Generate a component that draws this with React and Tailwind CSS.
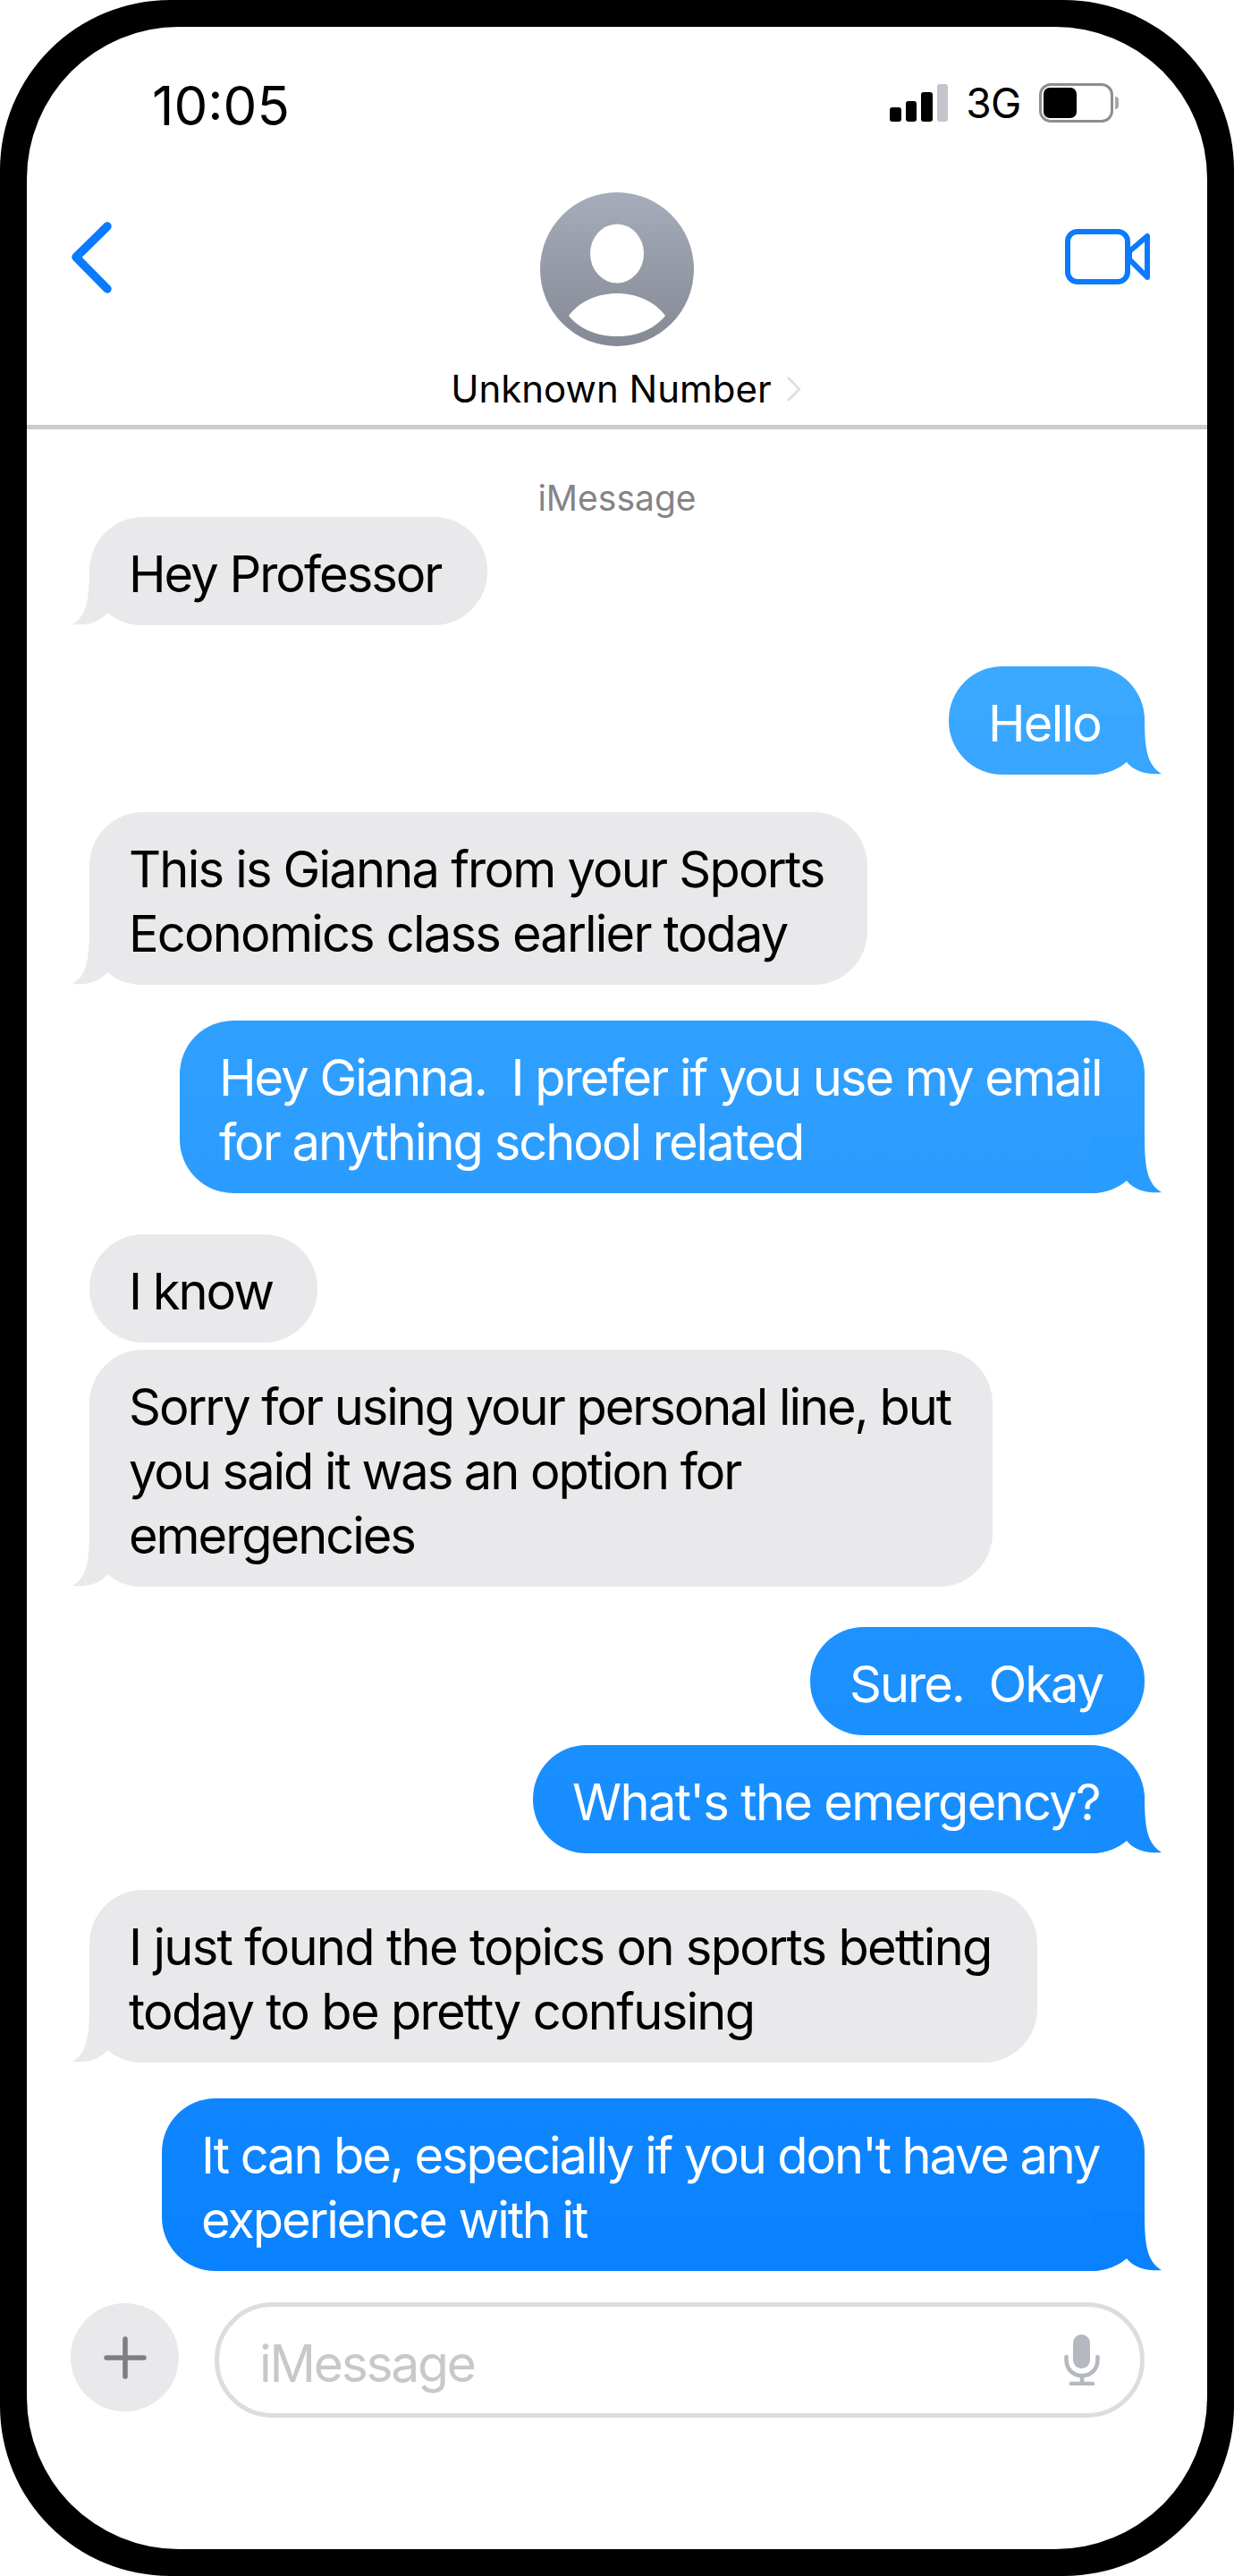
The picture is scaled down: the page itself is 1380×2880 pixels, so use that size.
const MESSAGES = [
  { me: false, w: "w-[445px]", mt: "mt-0", track: "tracking-[-2px]", lines: ["Hey Professor"], bg: "bg-[#e9e9eb]", tail: "text-[#e9e9eb]" },
  { me: true, w: "w-[219px]", mt: "mt-[46px]", track: "tracking-[-1.8px]", lines: ["Hello"], bg: "bg-linear-to-b from-[#3ba9ff] to-[#38a6ff]", tail: "text-[#38a6ff]" },
  { me: false, w: "w-[870px]", mt: "mt-[42px]", track: "tracking-[-1.8px]", lines: ["This is Gianna from your Sports", "Economics class earlier today"], bg: "bg-[#e9e9eb]", tail: "text-[#e9e9eb]" },
  { me: true, w: "w-[1079px]", mt: "mt-[40px]", track: "tracking-[-2px]", lines: ["Hey Gianna.  I prefer if you use my email", "for anything school related"], bg: "bg-linear-to-b from-[#30a0ff] to-[#2b9cff]", tail: "text-[#2b9cff]" },
  { me: false, w: "w-[255px]", mt: "mt-[46px]", track: "tracking-[-2px]", lines: ["I know"], bg: "bg-[#e9e9eb]" },
  { me: false, w: "w-[1010px]", mt: "mt-[8px]", track: "tracking-[-2.05px]", lines: ["Sorry for using your personal line, but", "you said it was an option for", "emergencies"], bg: "bg-[#e9e9eb]", tail: "text-[#e9e9eb]" },
  { me: true, w: "w-[374px]", mt: "mt-[45px]", track: "tracking-[-2px]", lines: ["Sure.  Okay"], bg: "bg-linear-to-b from-[#1e92ff] to-[#1a8fff]" },
  { me: true, w: "w-[684px]", mt: "mt-[11px]", track: "tracking-[-1.7px]", lines: ["What's the emergency?"], bg: "bg-linear-to-b from-[#1a8fff] to-[#178cff]", tail: "text-[#178cff]" },
  { me: false, w: "w-[1060px]", mt: "mt-[41px]", track: "tracking-[-1.7px]", lines: ["I just found the topics on sports betting", "today to be pretty confusing"], bg: "bg-[#e9e9eb]", tail: "text-[#e9e9eb]" },
  { me: true, w: "w-[1099px]", mt: "mt-[40px]", track: "tracking-[-2.1px]", lines: ["It can be, especially if you don't have any", "experience with it"], bg: "bg-linear-to-b from-[#0f86ff] to-[#0a82ff]", tail: "text-[#0a82ff]" },
];

function Tail({ me, color }) {
  return (
    <svg
      viewBox="0 0 80 66"
      className={`absolute bottom-0 w-[80px] h-[66px] ${color} ${me ? "right-[-20px]" : "left-[-20px] -scale-x-100"}`}
    >
      <path
        fill="currentColor"
        d="M0 0H60C60 35 62 55 79 65C68 66 50 65 40 52C32 59 18 66 0 66Z"
      />
    </svg>
  );
}

function Bubble({ msg }) {
  return (
    <div
      className={`relative ${msg.w} ${msg.mt} ${msg.bg} ${msg.track} ${msg.me ? "self-end text-white" : "self-start text-black"} rounded-[60px] pl-[44px] pr-[20px] pt-[28px] pb-[21px] text-[56px] leading-[72px] whitespace-pre`}
    >
      {msg.tail && <Tail me={msg.me} color={msg.tail} />}
      {msg.lines.map((line) => (
        <div key={line} className="relative">{line}</div>
      ))}
    </div>
  );
}

function StatusIcons() {
  return (
    <div className="flex items-center">
      <div className="flex items-end gap-[5px]">
        <div className="w-[13px] h-[16px] rounded-[3px] bg-black" />
        <div className="w-[12px] h-[23px] rounded-[3px] bg-black" />
        <div className="w-[13px] h-[33px] rounded-[3px] bg-black" />
        <div className="w-[12px] h-[42px] rounded-[3px] bg-[#c4c4cc]" />
      </div>
      <span className="ml-[20px] text-[46px] leading-none tracking-[-0.01em]">3G</span>
      <div className="ml-[20px] flex items-center">
        <div className="w-[83px] h-[44px] rounded-[13px] border-[3px] border-[#8e8e8e] p-[2px]">
          <div className="w-[37px] h-full rounded-[7px] bg-black" />
        </div>
        <div className="ml-[2px] w-[4px] h-[14px] rounded-r-full bg-[#a8a8a8]" />
      </div>
    </div>
  );
}

function Avatar() {
  return (
    <svg viewBox="0 0 172 172" className="w-[172px] h-[172px]">
      <defs>
        <linearGradient id="avatarGrad" x1="0" y1="0" x2="0" y2="1">
          <stop offset="0" stopColor="#a6acb9" />
          <stop offset="1" stopColor="#858995" />
        </linearGradient>
      </defs>
      <circle cx="86" cy="86" r="86" fill="url(#avatarGrad)" />
      <ellipse cx="86" cy="68.500" rx="30" ry="33" fill="#fff" />
      <path fill="#fff" d="M32 138C44 122 64 113 86 113C108 113 128 122 140 138C127 154 107 161 86 161C65 161 45 154 32 138Z" />
    </svg>
  );
}

export default function App() {
  return (
    <div className="w-[1380px] h-[2880px] bg-white [font-family:Inter,sans-serif]">
      <div className="w-full h-full p-[30px] bg-black rounded-[190px]">
        <div className="w-full h-full flex flex-col bg-white rounded-[170px] overflow-hidden text-black">
          {/* Status bar */}
          <div className="h-[170px] shrink-0 flex items-center justify-between pl-[140px] pr-[99px]">
            <span className="pt-[5px] text-[60px] leading-none">10:05</span>
            <StatusIcons />
          </div>

          {/* Contact header */}
          <div className="relative h-[280px] shrink-0 flex flex-col items-center border-b-[5px] border-[#cccccc] pt-[15px]">
            <svg viewBox="0 0 45 80" className="absolute left-[50px] top-[48px] w-[45px] h-[80px]" fill="none" stroke="#0a7aff" strokeWidth="9.5" strokeLinecap="round" strokeLinejoin="round">
              <path d="M40 5L5 39.500L40 75" />
            </svg>
            <svg viewBox="0 0 95 62" className="absolute right-[64px] top-[56px] w-[95px] h-[62px]" fill="none" stroke="#0a7aff" strokeWidth="6" strokeLinejoin="round">
              <rect x="3" y="3" width="67" height="56" rx="11" />
              <path d="M72 25L92 8V54L72 34Z" />
            </svg>
            <Avatar />
            <div className="ml-[20px] mt-[20px] flex items-center">
              <span className="text-[42px] leading-[56px]">Unknown Number</span>
              <svg viewBox="0 0 16 28" className="ml-[17px] w-[16px] h-[28px]" fill="none" stroke="#dddddd" strokeWidth="2.5">
                <path d="M1 1L14 14L1 27" />
              </svg>
            </div>
          </div>

          {/* Thread */}
          <div className="flex flex-col pl-[70px] pr-[70px]">
            <div className="pt-[55px] h-[98px] text-center text-[39px] leading-[43px] text-[#848487]">iMessage</div>
            {MESSAGES.map((msg) => (
              <Bubble key={msg.lines[0]} msg={msg} />
            ))}
          </div>

          {/* Composer */}
          <div className="mt-[35px] flex items-start pl-[49px]">
            <div className="mt-[1px] w-[121px] h-[121px] rounded-full bg-[#e9e9eb] flex items-center justify-center">
              <svg viewBox="0 0 48 48" className="w-[48px] h-[48px]" fill="none" stroke="#7e7e82" strokeWidth="5.500" strokeLinecap="round">
                <path d="M24 3V45M3 24H45" />
              </svg>
            </div>
            <div className="ml-[40px] w-[1040px] h-[129px] rounded-[65px] border-[5px] border-[#dddddd] flex items-center justify-between pl-[45px] pr-[45px]">
              <span className="pt-[8px] text-[57px] leading-none tracking-[-0.04em] text-[#c8c8ca]">iMessage</span>
              <svg viewBox="0 0 40 57" className="w-[40px] h-[57px]" fill="none" stroke="#b5b8c0" strokeWidth="4.500" strokeLinecap="round">
                <rect x="10" y="0" width="19" height="38" rx="9.500" fill="#b5b8c0" stroke="none" />
                <path d="M2.500 25V28C2.500 39 10 46 20 46C30 46 37.500 39 37.500 28V25" />
                <path d="M20 46V54M8 55H32" />
              </svg>
            </div>
          </div>
        </div>
      </div>
    </div>
  );
}
